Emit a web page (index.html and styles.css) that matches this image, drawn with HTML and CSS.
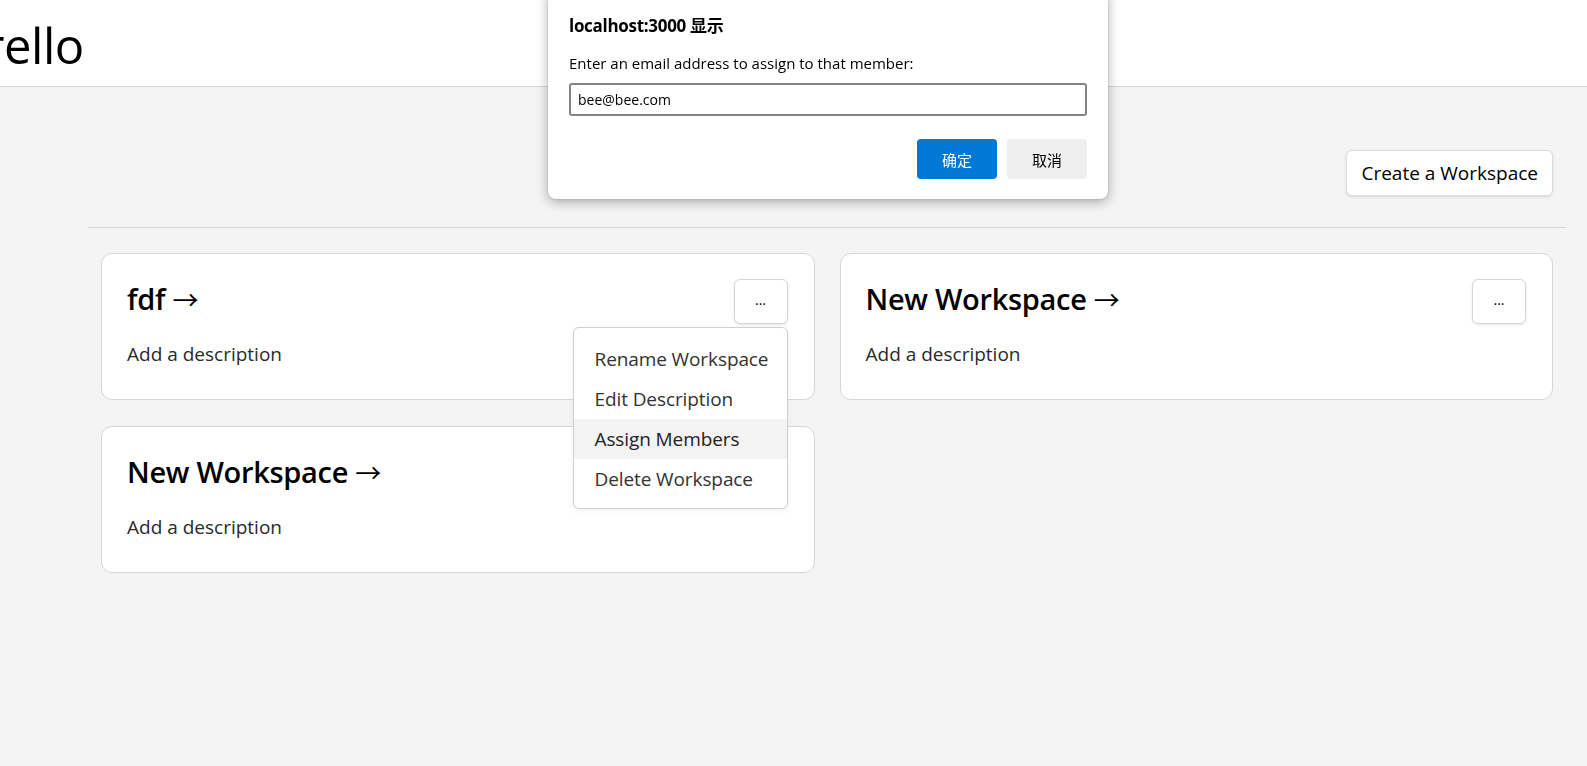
FILE: index.html
```html
<!DOCTYPE html>
<html lang="en">
<head>
<meta charset="utf-8">
<title>Trello</title>
<link rel="stylesheet" href="styles.css">
</head>
<body>
<header class="topbar">
  <h1 class="logo">Trello</h1>
</header>
<main class="main">
  <div class="toolbar">
    <button class="btn-create">Create a Workspace</button>
  </div>
  <hr class="divider">
  <div class="grid">
    <div class="card">
      <div class="card-head">
        <h2 class="card-title">fdf <span class="arrow">→</span></h2>
        <div class="menu-wrap">
          <button class="btn-more">...</button>
          <ul class="menu">
            <li class="menu-item">Rename Workspace</li>
            <li class="menu-item">Edit Description</li>
            <li class="menu-item is-hover">Assign Members</li>
            <li class="menu-item">Delete Workspace</li>
          </ul>
        </div>
      </div>
      <p class="card-desc">Add a description</p>
    </div>
    <div class="card">
      <div class="card-head">
        <h2 class="card-title">New Workspace <span class="arrow">→</span></h2>
        <div class="menu-wrap">
          <button class="btn-more">...</button>
        </div>
      </div>
      <p class="card-desc">Add a description</p>
    </div>
    <div class="card">
      <div class="card-head">
        <h2 class="card-title">New Workspace <span class="arrow">→</span></h2>
      </div>
      <p class="card-desc">Add a description</p>
    </div>
  </div>
</main>

<div class="dialog">
  <div class="dialog-title">localhost:3000 显示</div>
  <div class="dialog-msg">Enter an email address to assign to that member:</div>
  <input class="dialog-input" type="text" value="bee@bee.com">
  <div class="dialog-actions">
    <button class="dbtn dbtn-ok">确定</button>
    <button class="dbtn dbtn-cancel">取消</button>
  </div>
</div>
</body>
</html>
```

FILE: styles.css
```css
* { box-sizing: border-box; }

html, body {
  margin: 0;
  padding: 0;
  height: 100%;
}

body {
  background: #f4f4f4;
  font-family: "Open Sans", "Noto Sans", "Noto Sans CJK SC", sans-serif;
  color: #000;
  overflow: hidden;
}

.topbar {
  background: #fff;
  height: 87px;
  border-bottom: 1px solid #d4d4d4;
  display: flex;
  align-items: center;
  padding-top: 5px;
  overflow: hidden;
}

.logo {
  margin: 0 0 0 -42px;
  font-size: 49px;
  font-weight: 500;
  line-height: 1;
  letter-spacing: -0.5px;
  white-space: nowrap;
}

.main {
  padding: 0 21px 0 88px;
}

.toolbar {
  display: flex;
  justify-content: flex-end;
  padding: 63px 13px 0;
}

.btn-create {
  height: 46px;
  padding: 0 14px;
  background: #fff;
  border: 1px solid #dcdcdc;
  border-radius: 6px;
  box-shadow: 0 1px 3px rgba(0,0,0,0.12);
  font-family: inherit;
  font-size: 19px;
  color: #000;
}

.divider {
  margin: 31px 0 0;
  border: 0;
  border-top: 1px solid #d6d6d6;
  height: 0;
}

.grid {
  display: grid;
  grid-template-columns: 1fr 1fr;
  column-gap: 25px;
  row-gap: 26px;
  padding: 25px 13px 0;
}

.card {
  background: #fff;
  border: 1px solid #d6d6d6;
  border-radius: 11px;
  padding: 25px 26px 31px 25px;
  height: 147px;
}

.card-head {
  display: flex;
  justify-content: space-between;
  align-items: center;
  height: 45px;
}

.card-title {
  margin: 0 0 5px;
  font-size: 29px;
  font-weight: 600;
  line-height: 1.3;
  letter-spacing: -0.3px;
}

.arrow {
  font-weight: 400;
  font-size: 26px;
}

.card-desc {
  margin: 17px 0 0;
  font-size: 19px;
  line-height: 27px;
  color: #2a2a2a;
}

.menu-wrap {
  position: relative;
}

.btn-more {
  display: block;
  width: 54px;
  height: 45px;
  background: #fff;
  border: 1px solid #d6d6d6;
  border-radius: 6px;
  box-shadow: 0 1px 3px rgba(0,0,0,0.1);
  font-family: inherit;
  font-size: 14px;
  color: #000;
  padding: 0 0 4px;
}

.menu {
  position: absolute;
  right: 0;
  top: 48px;
  width: 215px;
  margin: 0;
  padding: 11px 0 9px;
  list-style: none;
  background: #fff;
  border: 1px solid #cfcfcf;
  border-radius: 6px;
  box-shadow: 0 2px 6px rgba(0,0,0,0.06);
  z-index: 5;
}

.menu-item {
  height: 40px;
  line-height: 40px;
  padding: 0 21px;
  font-size: 19px;
  color: #333;
  white-space: nowrap;
  letter-spacing: -0.1px;
}

.menu-item.is-hover {
  background: #f3f3f3;
  color: #222;
}

.dialog {
  position: fixed;
  left: 548px;
  top: -10px;
  width: 560px;
  padding: 26px 21px 20px;
  background: #fff;
  border-radius: 8px;
  box-shadow: 0 3px 12px rgba(0,0,0,0.32), 0 0 2px rgba(0,0,0,0.2);
  z-index: 10;
}

.dialog-title {
  font-size: 17px;
  font-weight: 700;
  line-height: 20px;
  letter-spacing: -0.3px;
}

.dialog-msg {
  margin-top: 17px;
  font-size: 15px;
  line-height: 20px;
  color: #000;
}

.dialog-input {
  display: block;
  margin-top: 10px;
  width: 100%;
  height: 33px;
  border: 2px solid #858585;
  border-radius: 3px;
  padding: 0 7px;
  font-family: inherit;
  font-size: 14px;
  color: #000;
  outline: none;
}

.dialog-actions {
  display: flex;
  justify-content: flex-end;
  gap: 10px;
  margin-top: 23px;
}

.dbtn {
  width: 80px;
  height: 40px;
  border: 0;
  border-radius: 4px;
  font-family: "Noto Sans CJK SC", sans-serif;
  font-size: 15px;
}

.dbtn-ok {
  background: #0078d4;
  color: #fff;
}

.dbtn-cancel {
  background: #efefef;
  color: #000;
}
```
